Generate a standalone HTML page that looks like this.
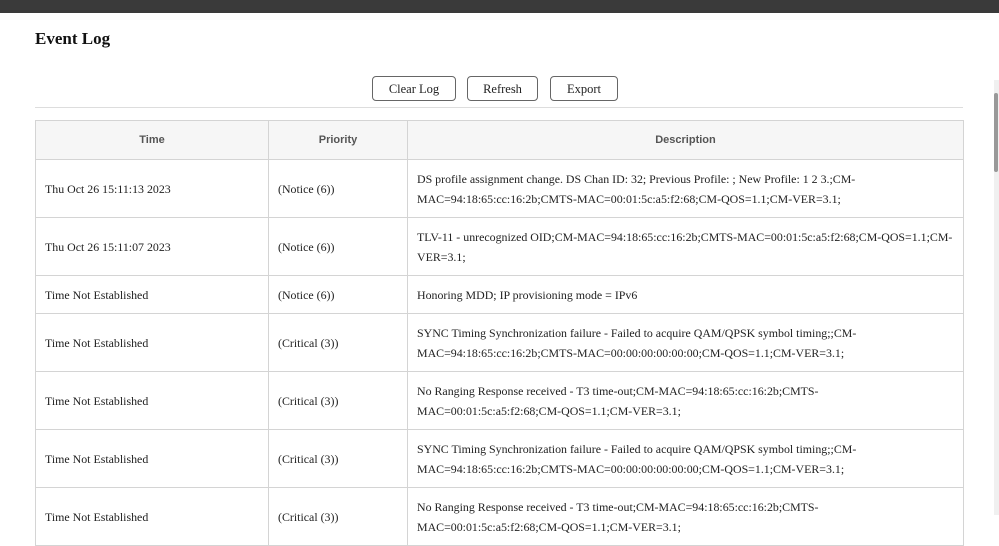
<!DOCTYPE html>
<html><head><style>
body{margin:0;width:999px;height:515px;overflow:hidden;background:#fff;font-family:"Liberation Serif",serif;color:#222;position:relative}
.top{position:absolute;left:0;top:0;width:999px;height:13px;background:#3a3a3a}
h1{position:absolute;left:35px;top:29px;margin:0;font-size:17px;font-weight:bold;color:#111}
.btn{position:absolute;top:76px;height:23px;border:1px solid #666;border-radius:4px;font-size:12.5px;line-height:25px;text-align:center;background:#fff;color:#222}
.hr{position:absolute;left:35px;top:107px;width:928px;height:1px;background:#ddd}
table{position:absolute;left:35px;top:120px;width:929px;border-collapse:collapse;font-size:11.9px;table-layout:fixed}
td,th{border:1px solid #d4d4d4;padding:0 9px;vertical-align:middle;white-space:nowrap;overflow:hidden}
th{background:#f6f6f6;height:38px;font-family:"Liberation Sans",sans-serif;font-size:11px;color:#555;font-weight:bold}
td{height:57px;line-height:20px}
tr.s td{height:37px}
.sb{position:absolute;right:0;top:80px;width:5px;height:435px;background:#f0f0f0}
.th{position:absolute;right:1px;top:93px;width:4px;height:79px;background:#999;border-radius:2px}
</style></head><body>
<div class="top"></div>
<h1>Event Log</h1>
<div class="btn" style="left:372px;width:82px">Clear Log</div>
<div class="btn" style="left:467px;width:69px">Refresh</div>
<div class="btn" style="left:550px;width:66px">Export</div>
<div class="hr"></div>
<table>
<tr><th style="width:214px">Time</th><th style="width:120px">Priority</th><th>Description</th></tr>
<tr><td>Thu Oct 26 15:11:13 2023</td><td>(Notice (6))</td><td>DS profile assignment change. DS Chan ID: 32; Previous Profile: ; New Profile: 1 2 3.;CM-<br>MAC=94:18:65:cc:16:2b;CMTS-MAC=00:01:5c:a5:f2:68;CM-QOS=1.1;CM-VER=3.1;</td></tr>
<tr><td>Thu Oct 26 15:11:07 2023</td><td>(Notice (6))</td><td>TLV-11 - unrecognized OID;CM-MAC=94:18:65:cc:16:2b;CMTS-MAC=00:01:5c:a5:f2:68;CM-QOS=1.1;CM-<br>VER=3.1;</td></tr>
<tr class="s"><td>Time Not Established</td><td>(Notice (6))</td><td>Honoring MDD; IP provisioning mode = IPv6</td></tr>
<tr><td>Time Not Established</td><td>(Critical (3))</td><td>SYNC Timing Synchronization failure - Failed to acquire QAM/QPSK symbol timing;;CM-<br>MAC=94:18:65:cc:16:2b;CMTS-MAC=00:00:00:00:00:00;CM-QOS=1.1;CM-VER=3.1;</td></tr>
<tr><td>Time Not Established</td><td>(Critical (3))</td><td>No Ranging Response received - T3 time-out;CM-MAC=94:18:65:cc:16:2b;CMTS-<br>MAC=00:01:5c:a5:f2:68;CM-QOS=1.1;CM-VER=3.1;</td></tr>
<tr><td>Time Not Established</td><td>(Critical (3))</td><td>SYNC Timing Synchronization failure - Failed to acquire QAM/QPSK symbol timing;;CM-<br>MAC=94:18:65:cc:16:2b;CMTS-MAC=00:00:00:00:00:00;CM-QOS=1.1;CM-VER=3.1;</td></tr>
<tr><td>Time Not Established</td><td>(Critical (3))</td><td>No Ranging Response received - T3 time-out;CM-MAC=94:18:65:cc:16:2b;CMTS-<br>MAC=00:01:5c:a5:f2:68;CM-QOS=1.1;CM-VER=3.1;</td></tr>
</table>
<div class="sb"></div><div class="th"></div>
</body></html>
